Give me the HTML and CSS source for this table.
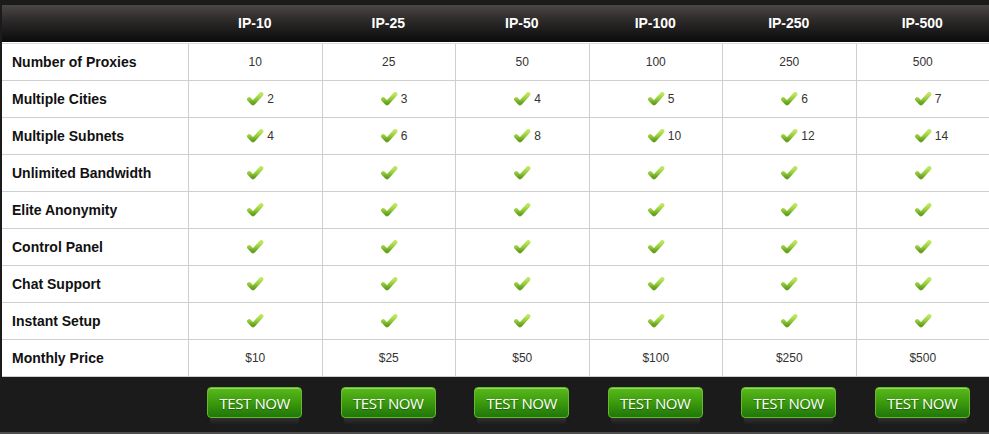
FILE: index.html
```html
<!DOCTYPE html>
<html>
<head>
<meta charset="utf-8">
<link rel="stylesheet" href="styles.css">
</head>
<body>
<svg width="0" height="0" class="defs" aria-hidden="true">
  <defs>
    <linearGradient id="chk" x1="0" y1="0" x2="0" y2="1">
      <stop offset="0" stop-color="#bde65e"/>
      <stop offset="0.55" stop-color="#92ca3a"/>
      <stop offset="1" stop-color="#66a01e"/>
    </linearGradient>
    <symbol id="check" viewBox="0 0 18 15">
      <path d="M3.2 8.2 L7 12.2 L15.2 3.2" fill="none" stroke="url(#chk)" stroke-width="4.3" stroke-linecap="round" stroke-linejoin="round"/>
    </symbol>
  </defs>
</svg>
<div class="wrap">
  <div class="table">
    <div class="row head">
      <div class="cell label"></div>
      <div class="cell">IP-10</div>
      <div class="cell">IP-25</div>
      <div class="cell">IP-50</div>
      <div class="cell">IP-100</div>
      <div class="cell">IP-250</div>
      <div class="cell">IP-500</div>
    </div>
    <div class="row">
      <div class="cell label">Number of Proxies</div>
      <div class="cell">10</div><div class="cell">25</div><div class="cell">50</div><div class="cell">100</div><div class="cell">250</div><div class="cell">500</div>
    </div>
    <div class="row">
      <div class="cell label">Multiple Cities</div>
      <div class="cell ck"><span></span><svg class="ic"><use href="#check"/></svg><span class="n">2</span></div>
      <div class="cell ck"><span></span><svg class="ic"><use href="#check"/></svg><span class="n">3</span></div>
      <div class="cell ck"><span></span><svg class="ic"><use href="#check"/></svg><span class="n">4</span></div>
      <div class="cell ck"><span></span><svg class="ic"><use href="#check"/></svg><span class="n">5</span></div>
      <div class="cell ck"><span></span><svg class="ic"><use href="#check"/></svg><span class="n">6</span></div>
      <div class="cell ck"><span></span><svg class="ic"><use href="#check"/></svg><span class="n">7</span></div>
    </div>
    <div class="row">
      <div class="cell label">Multiple Subnets</div>
      <div class="cell ck"><span></span><svg class="ic"><use href="#check"/></svg><span class="n">4</span></div>
      <div class="cell ck"><span></span><svg class="ic"><use href="#check"/></svg><span class="n">6</span></div>
      <div class="cell ck"><span></span><svg class="ic"><use href="#check"/></svg><span class="n">8</span></div>
      <div class="cell ck"><span></span><svg class="ic"><use href="#check"/></svg><span class="n">10</span></div>
      <div class="cell ck"><span></span><svg class="ic"><use href="#check"/></svg><span class="n">12</span></div>
      <div class="cell ck"><span></span><svg class="ic"><use href="#check"/></svg><span class="n">14</span></div>
    </div>
    <div class="row">
      <div class="cell label">Unlimited Bandwidth</div>
      <div class="cell"><svg class="ic"><use href="#check"/></svg></div>
      <div class="cell"><svg class="ic"><use href="#check"/></svg></div>
      <div class="cell"><svg class="ic"><use href="#check"/></svg></div>
      <div class="cell"><svg class="ic"><use href="#check"/></svg></div>
      <div class="cell"><svg class="ic"><use href="#check"/></svg></div>
      <div class="cell"><svg class="ic"><use href="#check"/></svg></div>
    </div>
    <div class="row">
      <div class="cell label">Elite Anonymity</div>
      <div class="cell"><svg class="ic"><use href="#check"/></svg></div>
      <div class="cell"><svg class="ic"><use href="#check"/></svg></div>
      <div class="cell"><svg class="ic"><use href="#check"/></svg></div>
      <div class="cell"><svg class="ic"><use href="#check"/></svg></div>
      <div class="cell"><svg class="ic"><use href="#check"/></svg></div>
      <div class="cell"><svg class="ic"><use href="#check"/></svg></div>
    </div>
    <div class="row">
      <div class="cell label">Control Panel</div>
      <div class="cell"><svg class="ic"><use href="#check"/></svg></div>
      <div class="cell"><svg class="ic"><use href="#check"/></svg></div>
      <div class="cell"><svg class="ic"><use href="#check"/></svg></div>
      <div class="cell"><svg class="ic"><use href="#check"/></svg></div>
      <div class="cell"><svg class="ic"><use href="#check"/></svg></div>
      <div class="cell"><svg class="ic"><use href="#check"/></svg></div>
    </div>
    <div class="row">
      <div class="cell label">Chat Support</div>
      <div class="cell"><svg class="ic"><use href="#check"/></svg></div>
      <div class="cell"><svg class="ic"><use href="#check"/></svg></div>
      <div class="cell"><svg class="ic"><use href="#check"/></svg></div>
      <div class="cell"><svg class="ic"><use href="#check"/></svg></div>
      <div class="cell"><svg class="ic"><use href="#check"/></svg></div>
      <div class="cell"><svg class="ic"><use href="#check"/></svg></div>
    </div>
    <div class="row">
      <div class="cell label">Instant Setup</div>
      <div class="cell"><svg class="ic"><use href="#check"/></svg></div>
      <div class="cell"><svg class="ic"><use href="#check"/></svg></div>
      <div class="cell"><svg class="ic"><use href="#check"/></svg></div>
      <div class="cell"><svg class="ic"><use href="#check"/></svg></div>
      <div class="cell"><svg class="ic"><use href="#check"/></svg></div>
      <div class="cell"><svg class="ic"><use href="#check"/></svg></div>
    </div>
    <div class="row">
      <div class="cell label">Monthly Price</div>
      <div class="cell">$10</div><div class="cell">$25</div><div class="cell">$50</div><div class="cell">$100</div><div class="cell">$250</div><div class="cell">$500</div>
    </div>
    <div class="row foot">
      <div class="cell label"></div>
      <div class="cell"><a class="btn">TEST NOW</a><span class="refl"></span></div>
      <div class="cell"><a class="btn">TEST NOW</a><span class="refl"></span></div>
      <div class="cell"><a class="btn">TEST NOW</a><span class="refl"></span></div>
      <div class="cell"><a class="btn">TEST NOW</a><span class="refl"></span></div>
      <div class="cell"><a class="btn">TEST NOW</a><span class="refl"></span></div>
      <div class="cell"><a class="btn">TEST NOW</a><span class="refl"></span></div>
    </div>
  </div>
</div>
</body>
</html>
```

FILE: styles.css
```css
html, body {
  margin: 0;
  padding: 0;
}
body {
  background: #4e4e4e;
  font-family: "Liberation Sans", Arial, sans-serif;
  width: 989px;
  height: 434px;
  overflow: hidden;
}
.defs {
  position: absolute;
  width: 0;
  height: 0;
}
.wrap {
  background: #1b1b1b;
  padding: 5px 0 0 2px;
  width: 987px;
}
.row {
  display: grid;
  grid-template-columns: 186px repeat(6, 1fr);
  height: 37px;
  background: #fff;
}
.row .cell {
  display: flex;
  align-items: center;
  justify-content: center;
  font-size: 12px;
  color: #333;
  border-left: 1px solid #cfcfcf;
  border-bottom: 1px solid #cfcfcf;
}
.row .cell.label {
  justify-content: flex-start;
  padding-left: 10px;
  border-left: none;
  font-weight: bold;
  font-size: 14px;
  color: #111;
}
.row.head {
  height: 39px;
  background: linear-gradient(#4c4747 0%, #2c2929 40%, #0b0b0b 95%, #fff 95%);
}
.row.head .cell {
  border: none;
  color: #fff;
  font-weight: bold;
  font-size: 14px;
  padding-bottom: 3px;
  border-bottom: 1px solid #dadada;
}
.ic {
  width: 18px;
  height: 15px;
  display: block;
  margin-top: -2px;
}
.cell.ck {
  display: grid;
  grid-template-columns: 1fr auto 1fr;
  align-items: center;
}
.cell.ck .n {
  justify-self: start;
  padding-left: 3px;
}
.row.foot {
  background: #1b1b1b;
  height: 55px;
}
.row.foot .cell {
  border: none;
  flex-direction: column;
  justify-content: flex-start;
  padding-top: 10px;
}
.btn {
  display: flex;
  align-items: center;
  justify-content: center;
  box-sizing: border-box;
  width: 95px;
  height: 31px;
  border-radius: 4px;
  border: 1px solid #66b82c;
  background: linear-gradient(#5ab91e 0%, #3e9e0d 45%, #20770a 100%);
  box-shadow: inset 0 1px 0 #92de56;
  color: #fff;
  font-family: "Open Sans", "Liberation Sans", sans-serif;
  font-size: 15px;
  letter-spacing: -0.4px;
  text-shadow: 0 1px 1px rgba(0,0,0,0.35);
}
.refl {
  display: block;
  width: 89px;
  height: 7px;
  border-radius: 0 0 4px 4px;
  background: linear-gradient(#303030, rgba(40,40,40,0));
}
```
